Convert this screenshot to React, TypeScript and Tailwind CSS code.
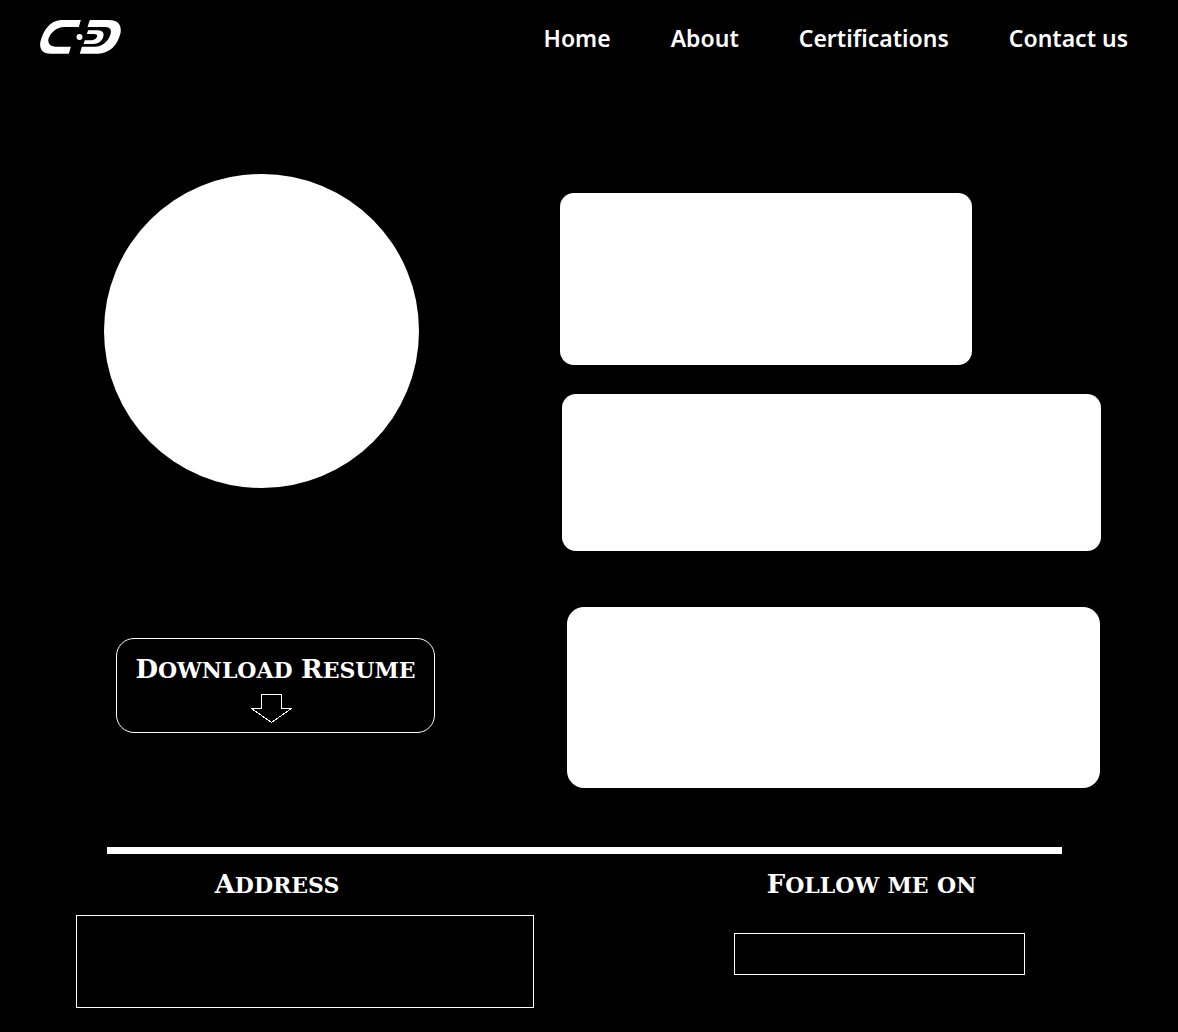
const links = ['Home', 'About', 'Certifications', 'Contact us'];

function Logo() {
  return (
    <svg viewBox="30 30 242 102" className="h-[34px] w-[81px]" fill="#fff" role="img" aria-label="CD">
      <path d="M152 30 H92 C60 32 40 60 31 94 C26 118 38 131 62 131 H116 L122 110 H74 C60 108 52 100 55 86 C62 66 80 52 102 51 H146 Z" />
      <path d="M179 30 H236 C265 30 275 46 271 70 C262 106 238 131 203 131 H149 L155 110 H196 C222 108 238 88 242 68 C244 56 236 51 222 51 H172 Z" />
      <path d="M174 61 H202 C218 61 223 70 219 82 C213 96 203 102 190 102 H160 L164 91 H184 C194 90 199 85 201 79 C202 74 198 72 190 72 H170 Z" />
      <circle cx="148" cy="81" r="9" />
    </svg>
  );
}

function Caps({ text }: { text: string }) {
  return (
    <>
      {text.split(' ').map((word, i) => (
        <span key={i}>
          {i > 0 && <span className="text-2xl"> </span>}
          <span className={/^[A-Z]/.test(word) ? 'inline-block first-letter:text-[26px]' : 'inline-block'}>
            {word}
          </span>
        </span>
      ))}
    </>
  );
}

const caps =
  "font-['DejaVu_Serif',serif] text-[32px] leading-8 font-bold whitespace-nowrap [font-variant-caps:small-caps]";

export default function App() {
  return (
    <div className="min-h-screen bg-black text-white">
      <header className="flex items-center justify-between pt-4 pr-[50px] pl-10">
        <a href="#home" className="block pb-0.5">
          <Logo />
        </a>
        <nav className="flex gap-[60px] font-['Noto_Sans',sans-serif] text-[23px] leading-[44px] font-semibold">
          {links.map((label) => (
            <a key={label} href={'#' + label.toLowerCase().replace(' ', '-')}>
              {label}
            </a>
          ))}
        </nav>
      </header>

      <main className="grid grid-cols-[560fr_618fr] pt-[114px]">
        <section className="flex flex-col items-start pl-[104px]">
          <div className="h-[314px] w-[315px] rounded-full bg-white" />
          <button
            type="button"
            className="mt-[150px] ml-3 flex h-[95px] w-[319px] flex-col items-center justify-center rounded-[18px] border border-white pt-1"
          >
            <span className={caps}>
              <Caps text="Download Resume" />
            </span>
            <svg
              viewBox="0 0 42 30"
              className="mt-2 mr-2 h-[30px] w-[42px]"
              fill="none"
              stroke="#fff"
              shapeRendering="crispEdges"
              aria-hidden="true"
            >
              <path d="M10.5 .5 H30.5 V14.5 H40.5 L20.5 28.5 L.5 14.5 H10.5 Z" />
            </svg>
          </button>
        </section>
        <section className="flex flex-col pt-[19px]">
          <div className="h-[172px] w-2/3 rounded-[14px] bg-white" />
          <div className="mt-[29px] mr-[77px] ml-0.5 h-[157px] rounded-[14px] bg-white" />
          <div className="mt-14 mr-[78px] ml-[7px] h-[181px] rounded-[17px] bg-white" />
        </section>
      </main>

      <hr className="mt-[59px] mr-[116px] ml-[107px] h-[7px] border-0 bg-white" />

      <footer className="flex justify-between pt-3 pr-[153px] pb-6 pl-[76px]">
        <section className="w-[458px]">
          <h2 className={caps + ' pr-14 text-center'}>
            <Caps text="Address" />
          </h2>
          <div className="mt-[15px] h-[93px] border border-white" />
        </section>
        <section className="w-[291px]">
          <h2 className={caps + ' pr-4 text-center'}>
            <Caps text="Follow me on" />
          </h2>
          <div className="mt-8 h-[42px] border border-white" />
        </section>
      </footer>
    </div>
  );
}
